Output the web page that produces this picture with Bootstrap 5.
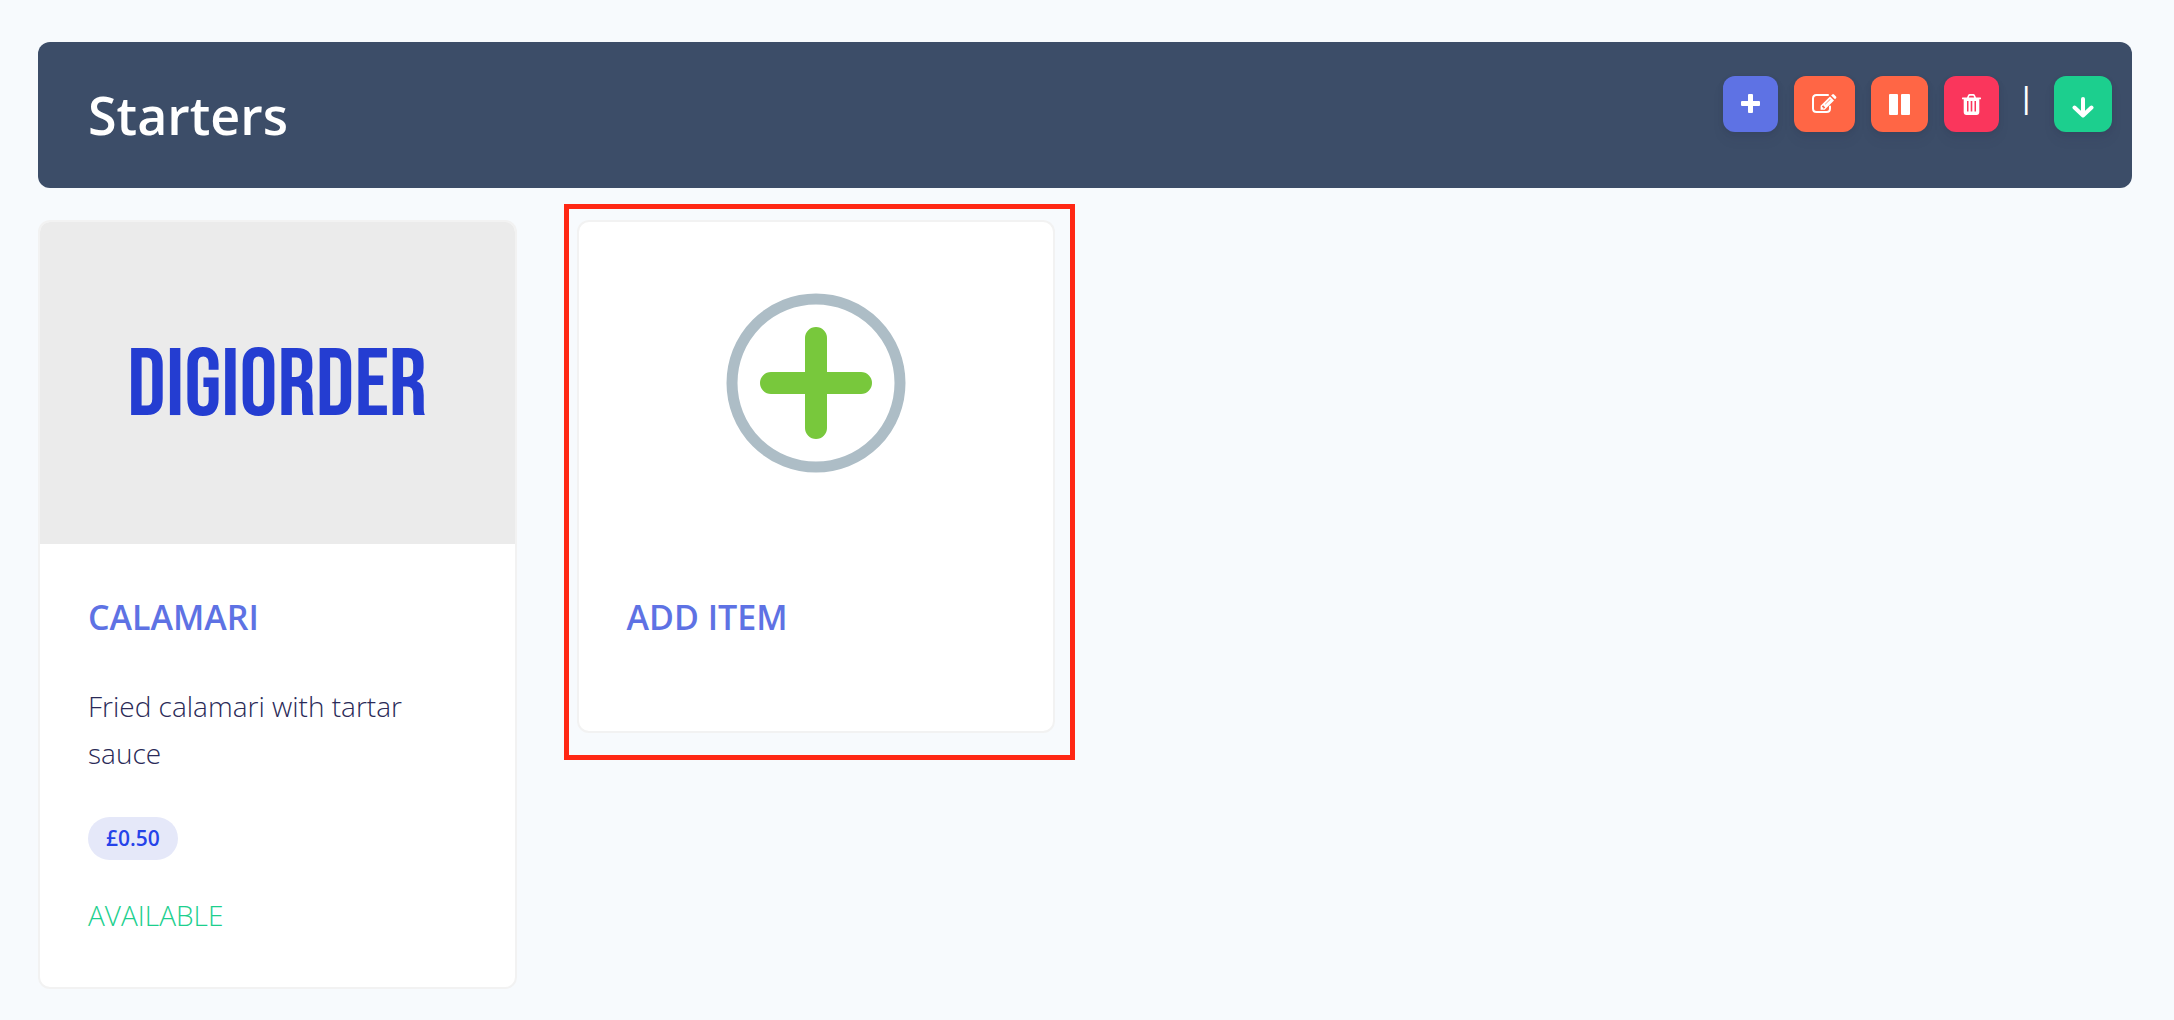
<!DOCTYPE html>
<html lang="en">
<head>
<meta charset="utf-8">
<meta name="viewport" content="width=device-width, initial-scale=1">
<title>Starters</title>
<link href="https://cdn.jsdelivr.net/npm/bootstrap@5.3.0/dist/css/bootstrap.min.css" rel="stylesheet">
<style>
body{background:#f7fafd;color:#2a2a57;font-family:"Open Sans",sans-serif;font-size:28px;font-weight:300;line-height:47px}
.page{padding:42px 42px 30px 38px}
.banner{background:#3c4d68;border-radius:12px;min-height:146px;padding:34px 20px 34px 50px;margin-bottom:32px}
.banner h1{font-size:52px;font-weight:600;line-height:78px;color:#fff}
.tool{--bs-btn-padding-x:18px;height:56px;border:0;border-radius:12px;color:#fff;box-shadow:0 8px 12px rgba(50,50,93,.08),0 2px 6px rgba(0,0,0,.08)}
.tool svg{display:block}
.tool:hover{color:#fff;filter:brightness(1.05)}
.tool-add,.tool-add:hover{background:#5e72e4}
.tool-edit,.tool-edit:hover{background:#ff6645}
.tool-delete,.tool-delete:hover{background:#fa365c}
.tool-move,.tool-move:hover{background:#1ccf8e}
.divider{color:#fff;font-weight:600;line-height:42px}
.menu-grid{--bs-gutter-x:60px;--bs-gutter-y:32px}
.item{--bs-card-border-width:2px;--bs-card-border-color:#f2f2f2;--bs-card-border-radius:12px;--bs-card-inner-border-radius:10px;color:inherit;overflow:hidden}
.photo{height:322px}
.photo-brand{background:#ebebeb;color:#243dd1;font-family:"Bebas Neue","Roboto Condensed",sans-serif;font-weight:400;font-size:95px;padding-top:7px}
.item .card-body{padding:48px}
.item h2{font-size:34px;font-weight:600;line-height:50px;margin:0 0 41px}
.item a{color:#5e72e4}
.item p{margin-bottom:40px}
.price{background:#e5e8f9;color:#2643e9;font-size:21px;font-weight:600;line-height:23px;padding:10px 18px;margin-bottom:32px}
.available{color:#1ccf8e}
.frame{border:5px solid #ff2714;position:absolute;inset:-16px -20px -27px -13px;pointer-events:none}
</style>
</head>
<body>
<main class="page">
<header class="banner d-flex justify-content-between align-items-start">
<h1 class="m-0">Starters</h1>
<div class="d-flex align-items-start gap-3">
<button type="button" class="btn tool tool-add" aria-label="Add category"><svg width="19" height="20" viewBox="0 0 19 20" fill="currentColor"><rect x="7" y="0" width="5" height="19" rx="1"/><rect x="0" y="7" width="19" height="5" rx="1"/></svg></button>
<button type="button" class="btn tool tool-edit" aria-label="Edit"><svg width="25" height="20" viewBox="0 0 25 20" fill="none" stroke="currentColor"><path stroke-width="2" stroke-linecap="round" d="M16 1H4.500Q1 1 1 4.500V14.500Q1 18 4.500 18H14.500Q18 18 18 14.500V12.500"/><path fill="currentColor" stroke="none" fill-rule="evenodd" d="M18 2.600 22 6.600 12.700 15.800H8.600V11.800ZM19.100 1.500 20.200.4Q21.100-.4 22 .4L24 2.400Q24.800 3.300 24 4.200L23 5.300ZM10 12.500V13.300H11.200V14.500H12.100L13.200 13.400 11.100 11.300ZM12.900 10.200 13.300 10.600 18.500 5.400 18.100 5Z"/></svg></button>
<button type="button" class="btn tool tool-edit" aria-label="Columns"><svg width="21" height="21" viewBox="0 0 21 21" fill="currentColor"><rect width="9" height="21" rx="1"/><rect x="12" width="9" height="21" rx="1"/></svg></button>
<button type="button" class="btn tool tool-delete" aria-label="Delete"><svg width="19" height="21" viewBox="0 0 19 21" fill="currentColor"><path fill-rule="evenodd" d="M5 3.500 6 1.200Q6.500 0 7.700 0H11.300Q12.500 0 13 1.200L14 3.500H18.500Q19 3.500 19 4V4.800Q19 5.300 18.500 5.300H17.300V18Q17.300 21 14.500 21H4.500Q1.700 21 1.700 18V5.300H.5Q0 5.300 0 4.800V4Q0 3.500.5 3.500ZM6.800 3.500H12.200L11.600 2Q11.500 1.700 11 1.700H8Q7.500 1.700 7.400 2ZM5 7V17.500H6.500V7ZM8.700 7V17.500H10.300V7ZM12.500 7V17.500H14V7Z"/></svg></button>
<span class="divider px-1">|</span>
<button type="button" class="btn tool tool-move" aria-label="Move down"><svg width="22" height="28" viewBox="0 -6 22 28" fill="none" stroke="currentColor" stroke-width="4" stroke-linecap="round"><path d="M11 3V18"/><path stroke-linejoin="round" d="M2.500 11.500 11 19.500 19.500 11.500"/></svg></button>
</div>
</header>
<div class="row menu-grid align-items-start">
<div class="col-12 col-md-6 col-xl-3">
<article class="card item">
<div class="photo photo-brand d-flex align-items-center justify-content-center">DIGIORDER</div>
<div class="card-body">
<h2><a href="#" class="text-decoration-none">CALAMARI</a></h2>
<p>Fried calamari with tartar sauce</p>
<div class="d-flex"><span class="price rounded-pill">£0.50</span></div>
<div class="available">AVAILABLE</div>
</div>
</article>
</div>
<div class="col-12 col-md-6 col-xl-3">
<div class="position-relative">
<article class="card item">
<div class="photo d-flex align-items-center justify-content-center"><svg width="180" height="180" viewBox="0 0 180 180" fill="none"><circle cx="90" cy="90" r="84" stroke="#adbdc6" stroke-width="11"/><path d="M90 45V135M45 90H135" stroke="#78c83c" stroke-width="22" stroke-linecap="round"/></svg></div>
<div class="card-body">
<h2><a href="#" class="text-decoration-none">ADD ITEM</a></h2>
</div>
</article>
<div class="frame"></div>
</div>
</div>
</div>
</main>
<script src="https://cdn.jsdelivr.net/npm/bootstrap@5.3.0/dist/js/bootstrap.bundle.min.js"></script>
</body>
</html>
